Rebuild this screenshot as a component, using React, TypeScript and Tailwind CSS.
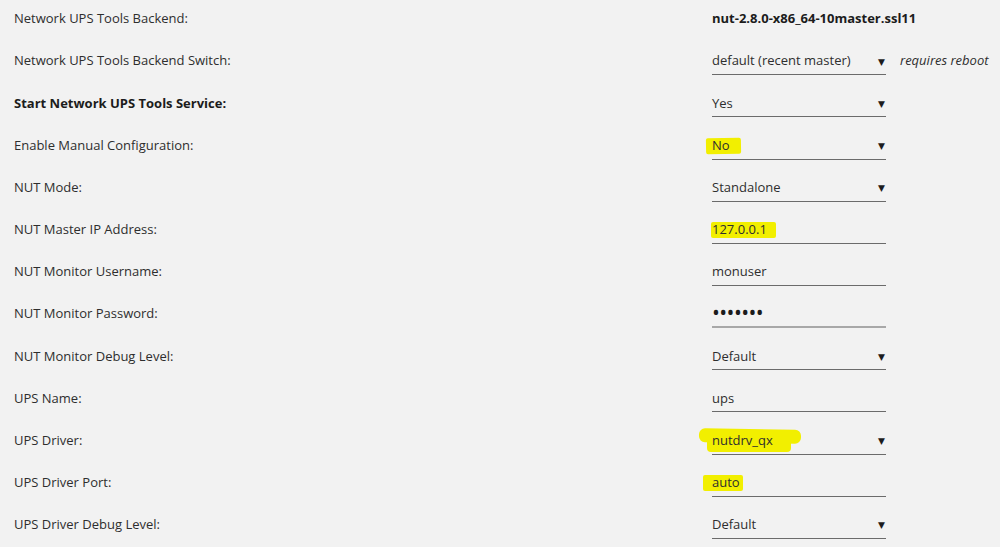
import React from "react";

type Row = {
  label: string;
  value: string;
  kind: "text" | "select" | "input" | "password";
  bold?: boolean;
  mark?: "no" | "ip" | "driver" | "port";
  note?: string;
};

const rows: Row[] = [
  { label: "Network UPS Tools Backend:", value: "nut-2.8.0-x86_64-10master.ssl11", kind: "text" },
  { label: "Network UPS Tools Backend Switch:", value: "default (recent master)", kind: "select", note: "requires reboot" },
  { label: "Start Network UPS Tools Service:", value: "Yes", kind: "select", bold: true },
  { label: "Enable Manual Configuration:", value: "No", kind: "select", mark: "no" },
  { label: "NUT Mode:", value: "Standalone", kind: "select" },
  { label: "NUT Master IP Address:", value: "127.0.0.1", kind: "input", mark: "ip" },
  { label: "NUT Monitor Username:", value: "monuser", kind: "input" },
  { label: "NUT Monitor Password:", value: "•••••••", kind: "password" },
  { label: "NUT Monitor Debug Level:", value: "Default", kind: "select" },
  { label: "UPS Name:", value: "ups", kind: "input" },
  { label: "UPS Driver:", value: "nutdrv_qx", kind: "select", mark: "driver" },
  { label: "UPS Driver Port:", value: "auto", kind: "input", mark: "port" },
  { label: "UPS Driver Debug Level:", value: "Default", kind: "select" },
];

// yellow marker strokes that sit behind the value
function Mark({ type }: { type: Row["mark"] }) {
  if (type === "no")
    return <span className="absolute left-[-6px] top-[-8px] w-[35px] h-[16px] bg-[#f2ef00] rounded-[2px] -rotate-1" />;
  if (type === "ip")
    return <span className="absolute left-[-1px] top-[-8px] w-[65px] h-[16px] bg-[#f2ef00] rounded-[2px]" />;
  if (type === "driver")
    return (
      <>
        <span className="absolute left-[-13px] top-[-12px] w-[102px] h-[14px] bg-[#f2ef00] rounded-[6px] rotate-1" />
        <span className="absolute left-[-5px] top-[-3px] w-[84px] h-[14px] bg-[#f2ef00] rounded-[4px]" />
      </>
    );
  if (type === "port")
    return <span className="absolute left-[-9px] top-[-8px] w-[40px] h-[16px] bg-[#f2ef00] rounded-[2px]" />;
  return null;
}

function Control({ row }: { row: Row }) {
  if (row.kind === "text") {
    return <span className="font-bold text-[#1c1c1c]">{row.value}</span>;
  }
  const line = row.kind === "password" ? "border-b-2 border-[#a8a8a8]" : "border-b border-[#6b6b6b]";
  return (
    <div className={`w-[174px] h-[28px] pt-[1px] flex items-center justify-between ${line}`}>
      <div className="relative">
        {row.mark && (
          <span className="absolute left-0 top-1/2">
            <Mark type={row.mark} />
          </span>
        )}
        <span
          className={`relative ${
            row.kind === "password" ? "text-[21px] tracking-[-0.6px] leading-none text-[#1c1c1c]" : ""
          }`}
        >
          {row.value}
        </span>
      </div>
      {row.kind === "select" && <span className="pr-[1px] text-[9px] leading-none text-[#1c1c1c]">▼</span>}
    </div>
  );
}

export default function App() {
  return (
    <div
      className="w-[1000px] h-[547px] overflow-hidden bg-[#f2f2f2] text-[#2e2e2e] text-[13px]"
      style={{ fontFamily: '"Open Sans", "DejaVu Sans", sans-serif' }}
    >
      <div className="-mt-[2px]">
        {rows.map((row) => (
          <div key={row.label} className="flex items-center h-[42.17px]">
            <div className={`w-[712px] pl-[14px] ${row.bold ? "font-bold text-[#1c1c1c]" : ""}`}>{row.label}</div>
            <div className="flex items-center">
              <Control row={row} />
              {row.note && <span className="ml-[14px] italic">{row.note}</span>}
            </div>
          </div>
        ))}
      </div>
    </div>
  );
}
